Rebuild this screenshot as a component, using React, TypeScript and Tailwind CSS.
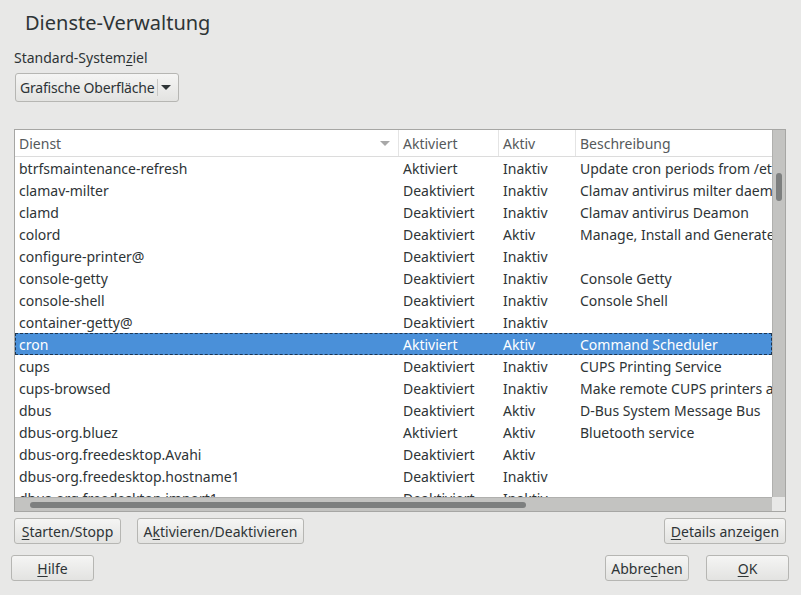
import React from "react";

const rows: [string, string, string, string][] = [
  ["btrfsmaintenance-refresh", "Aktiviert", "Inaktiv", "Update cron periods from /etc/sysconfig/btrfsmaintenance"],
  ["clamav-milter", "Deaktiviert", "Inaktiv", "Clamav antivirus milter daemon"],
  ["clamd", "Deaktiviert", "Inaktiv", "Clamav antivirus Deamon"],
  ["colord", "Deaktiviert", "Aktiv", "Manage, Install and Generate Color Profiles"],
  ["configure-printer@", "Deaktiviert", "Inaktiv", ""],
  ["console-getty", "Deaktiviert", "Inaktiv", "Console Getty"],
  ["console-shell", "Deaktiviert", "Inaktiv", "Console Shell"],
  ["container-getty@", "Deaktiviert", "Inaktiv", ""],
  ["cron", "Aktiviert", "Aktiv", "Command Scheduler"],
  ["cups", "Deaktiviert", "Inaktiv", "CUPS Printing Service"],
  ["cups-browsed", "Deaktiviert", "Inaktiv", "Make remote CUPS printers available locally"],
  ["dbus", "Deaktiviert", "Aktiv", "D-Bus System Message Bus"],
  ["dbus-org.bluez", "Aktiviert", "Aktiv", "Bluetooth service"],
  ["dbus-org.freedesktop.Avahi", "Deaktiviert", "Aktiv", ""],
  ["dbus-org.freedesktop.hostname1", "Deaktiviert", "Inaktiv", ""],
  ["dbus-org.freedesktop.import1", "Deaktiviert", "Inaktiv", ""],
];

function Btn({ children, className }: { children: React.ReactNode; className: string }) {
  return (
    <div
      className={
        "flex items-center justify-center rounded-[3px] border border-[#b6b6b3] bg-gradient-to-b from-[#f5f5f4] to-[#e3e3e1] text-[14px] text-[#2e3436] h-[26px] " +
        className
      }
    >
      {children}
    </div>
  );
}

export default function App() {
  return (
    <div
      className="w-[801px] h-[595px] bg-[#e8e8e7] text-[#2e3436] flex flex-col overflow-hidden"
      style={{ fontFamily: '"Noto Sans", "Open Sans", sans-serif' }}
    >
      <div className="pl-[25px] pt-[9px] h-[38px] text-[20px] leading-[27px] text-[#2e3436]">Dienste-Verwaltung</div>
      <div className="pl-[14px] mt-[10px] h-[19px] text-[14px] leading-[19px]">
        Standard-System<span className="underline underline-offset-2">z</span>iel
      </div>
      <div className="pl-[15px] mt-[6px] flex">
        <div className="flex items-center h-[29px] pr-[7px] rounded-[3px] border border-[#b6b6b3] bg-gradient-to-b from-[#f5f5f4] to-[#e3e3e1] text-[14px]">
          <span className="pl-[4px] pr-[3px] tracking-[-0.2px] whitespace-nowrap">Grafische Oberfläche</span>
          <div className="w-px h-[17px] bg-[#c8c8c6]" />
          <svg width="10" height="6" viewBox="0 0 10 6" className="ml-[3px]">
            <path d="M0 0 L10 0 L5 5 Z" fill="#2e3436" />
          </svg>
        </div>
      </div>
      {/* table frame */}
      <div className="ml-[14px] mt-[27px] w-[772px] h-[383px] border border-[#a6a6a4] bg-white flex flex-col">
        <div className="flex h-[367px]">
          <div className="flex-1 overflow-hidden flex flex-col">
            <div className="flex h-[27px] border-b border-[#dcdcdc] text-[14px] text-[#55595b] shrink-0">
              <div className="w-[384px] shrink-0 flex items-center pl-[4px] border-r border-[#e4e4e4] relative">
                Dienst
                <svg width="10" height="6" viewBox="0 0 10 6" className="absolute left-[365px] top-[11px]">
                  <path d="M0 0 L10 0 L5 5 Z" fill="#a8a8a8" />
                </svg>
              </div>
              <div className="w-[100px] shrink-0 flex items-center pl-[4px] border-r border-[#e4e4e4]">Aktiviert</div>
              <div className="w-[77px] shrink-0 flex items-center pl-[4px] border-r border-[#e4e4e4]">Aktiv</div>
              <div className="w-[400px] shrink-0 flex items-center pl-[4px]">Beschreibung</div>
            </div>
            {rows.map((r, i) => {
              const sel = r[0] === "cron";
              return (
                <div
                  key={i}
                  className={
                    "flex h-[22px] shrink-0 text-[14px] leading-[20px] whitespace-nowrap " +
                    (sel ? "bg-[#4a90d9] text-white border border-dashed border-[#1d3550]" : "border border-transparent")
                  }
                >
                  <div className="w-[383px] shrink-0 pl-[3px] relative top-[1px]">{r[0]}</div>
                  <div className="w-[100px] shrink-0 pl-[4px] relative top-[1px]">{r[1]}</div>
                  <div className="w-[77px] shrink-0 pl-[4px] relative top-[1px]">{r[2]}</div>
                  <div className="w-[400px] shrink-0 pl-[4px] relative top-[1px]">{r[3]}</div>
                </div>
              );
            })}
          </div>
          <div className="w-[13px] bg-[#c3c3c1] border-l border-[#b0b0ae] shrink-0 relative">
            <div className="absolute left-[3px] top-[43px] w-[6px] h-[28px] rounded-full bg-[#7d7f7f]" />
          </div>
        </div>
        <div className="flex h-[14px]">
          <div className="flex-1 bg-[#c3c3c1] border-t border-[#b0b0ae] relative">
            <div className="absolute left-[15px] top-[4px] w-[496px] h-[6px] rounded-full bg-[#7d7f7f]" />
          </div>
          <div className="w-[13px] bg-[#e8e8e7]" />
        </div>
      </div>
      <div className="flex items-center mt-[6px] pl-[14px] pr-[15px]">
        <Btn className="w-[107px]">
          <span>
            <span className="underline underline-offset-2">S</span>tarten/Stopp
          </span>
        </Btn>
        <Btn className="w-[167px] ml-[16px]">
          <span>
            A<span className="underline underline-offset-2">k</span>tivieren/Deaktivieren
          </span>
        </Btn>
        <div className="flex-1" />
        <Btn className="w-[122px]">
          <span>
            <span className="underline underline-offset-2">D</span>etails anzeigen
          </span>
        </Btn>
      </div>
      <div className="flex items-center mt-[11px] pl-[11px] pr-[12px]">
        <Btn className="w-[83px]">
          <span>
            <span className="underline underline-offset-2">H</span>ilfe
          </span>
        </Btn>
        <div className="flex-1" />
        <Btn className="w-[84px]">
          <span>
            Abbre<span className="underline underline-offset-2">c</span>hen
          </span>
        </Btn>
        <Btn className="w-[83px] ml-[17px]">
          <span>
            <span className="underline underline-offset-2">O</span>K
          </span>
        </Btn>
      </div>
    </div>
  );
}
